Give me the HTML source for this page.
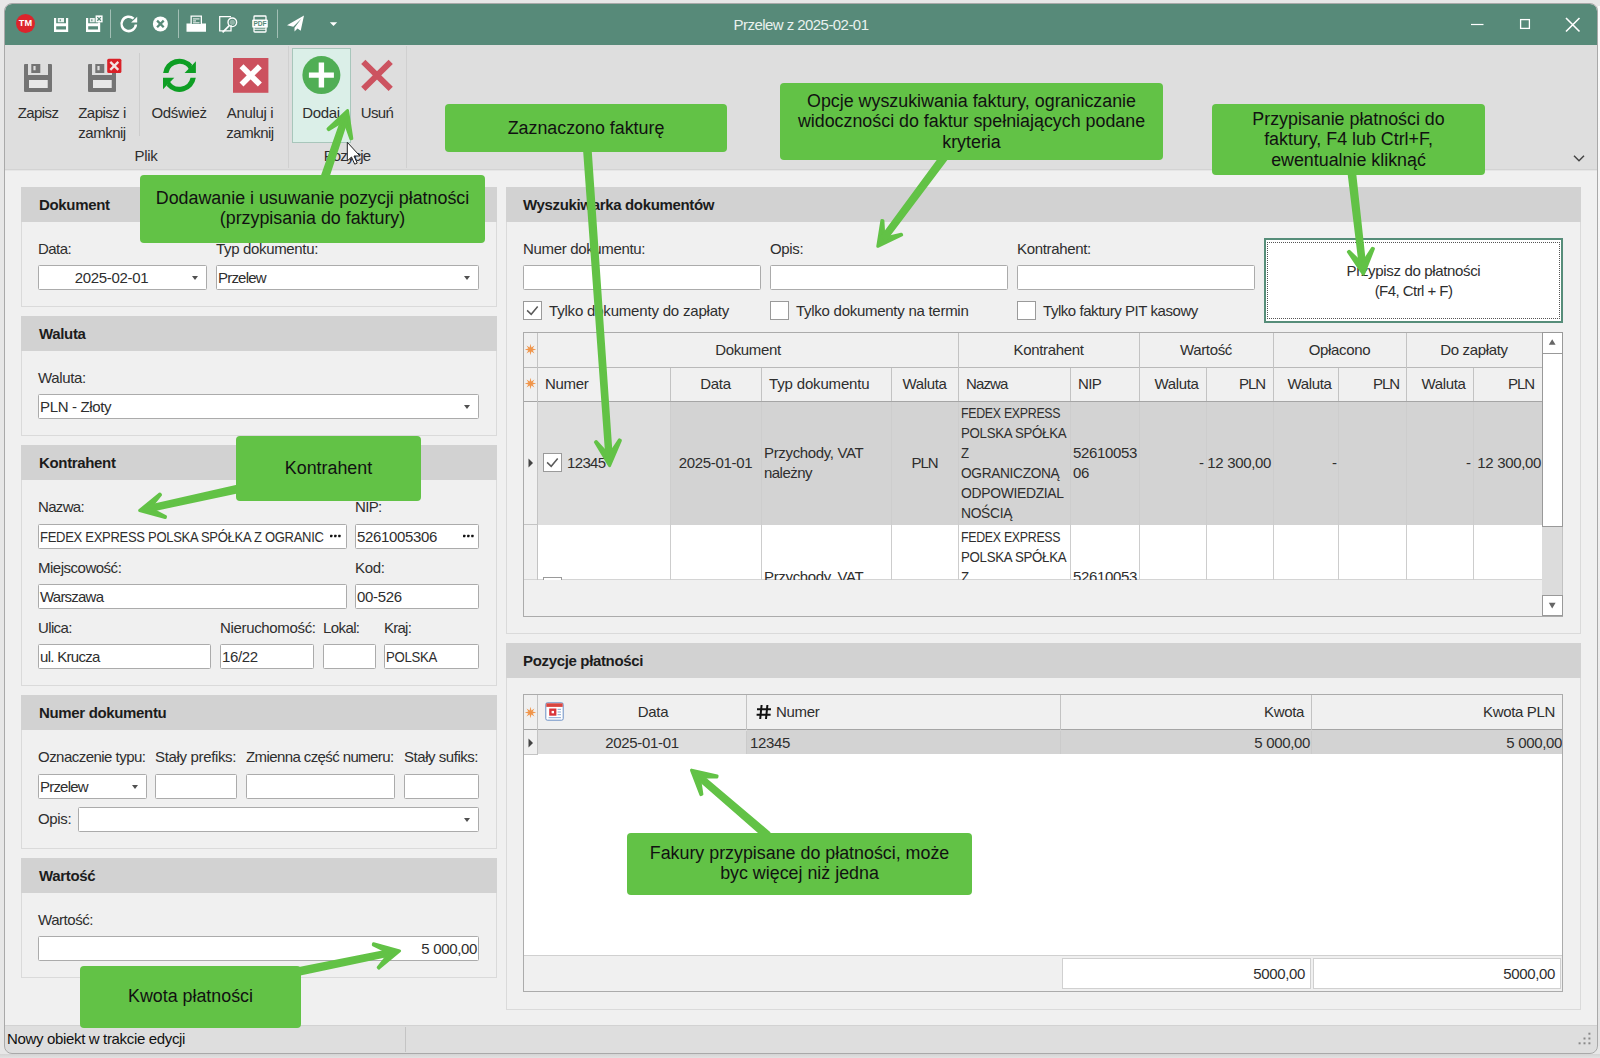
<!DOCTYPE html>
<html>
<head>
<meta charset="utf-8">
<title>Przelew z 2025-02-01</title>
<style>
*{box-sizing:border-box;margin:0;padding:0}
html,body{width:1600px;height:1058px;overflow:hidden}
body{position:relative;background:#e7e7e7;font-family:"Liberation Sans",sans-serif;font-size:15px;letter-spacing:-0.34px;color:#2e2e2e;line-height:20px}
.a{position:absolute}
.t{position:absolute;white-space:nowrap;line-height:20px;height:20px}
.c{text-align:center}
.r{text-align:right}
.b{font-weight:bold;color:#1c1c1c}
/* window */
#frame{left:4px;top:3px;width:1594px;height:1051px;border:1px solid #a9a9a9;border-radius:8px;z-index:50;pointer-events:none}
#titlebar{left:5px;top:4px;width:1592px;height:41px;background:#578a79;border-radius:7px 7px 0 0}
#ribbon{left:5px;top:45px;width:1592px;height:125px;background:#dedede}
#ribbonline{left:5px;top:169px;width:1592px;height:2px;background:linear-gradient(#d3d3d3,#d3d3d3 50%,#e6e6e6 50%)}
#content{left:5px;top:171px;width:1592px;height:855px;background:#f0f0f0}
#status{left:5px;top:1025px;width:1592px;height:28px;background:#dedede;border-radius:0 0 7px 7px;border-top:1px solid #d2d2d2}
/* group boxes */
.g{position:absolute;border:1px solid #dadada;background:#f0f0f0}
.gh{position:absolute;left:-1px;top:-1px;right:-1px;height:35px;background:#d2d2d2}
.gh span{position:absolute;left:18px;top:7.5px;font-weight:bold;color:#1c1c1c;white-space:nowrap;line-height:20px}
/* inputs */
.i{position:absolute;height:25px;border:1px solid #ababab;border-radius:1.5px;background:#fff;line-height:23px;padding-left:1px;white-space:nowrap;overflow:hidden}
.dd{position:absolute;width:0;height:0;border-left:3.5px solid transparent;border-right:3.5px solid transparent;border-top:4px solid #505050}
.cb{position:absolute;width:19px;height:19px;border:1px solid #9a9a9a;background:#fff}
.vl{width:1px;background:#c3c3c3}
.cl{top:69px;width:1px;height:178px;background:#cdcdcd}
.u{transform:scaleX(.885);transform-origin:0 50%}
/* callouts */
.co{position:absolute;background:#62c246;border-radius:4px;color:#111;font-size:17.85px;letter-spacing:0;line-height:20.3px;text-align:center;z-index:30;white-space:nowrap}
#arrows{left:0;top:0;z-index:29}
#arrows path{fill:#62c246;stroke:#62c246;stroke-width:3;stroke-linejoin:round}
</style>
</head>
<body>
<!-- window chrome -->
<div class="a" style="left:0;top:1054px;width:1600px;height:4px;background:linear-gradient(#d4d4d4,#e2e2e2)"></div>
<div class="a" style="left:1598px;top:6px;width:2px;height:1040px;background:linear-gradient(#fafafa,#f4f4f4 30%,#e4e4e4)"></div>
<div class="a" id="titlebar"></div>
<div class="a" id="ribbon"></div>
<div class="a" id="ribbonline"></div>
<div class="a" id="content"></div>
<div class="a" id="status"></div>
<div class="a" id="frame"></div>

<!-- title bar -->
<div class="a" style="left:16px;top:14px;width:19px;height:19px;border-radius:50%;background:#dc242c"></div>
<div class="t c" style="left:16px;top:14px;width:19px;height:19px;line-height:19px;font-size:9.2px;font-weight:bold;color:#fff;letter-spacing:0">TM</div>
<svg class="a" style="left:0;top:0" width="400" height="46" viewBox="0 0 400 46">
 <g fill="#fff">
  <!-- save 1 -->
  <path d="M54 18h2.200v5.200h9.800v-5.200h2.200v14H54z M56.200 26.300v3.200h9.800v-3.200z" fill-rule="evenodd"/>
  <path d="M57.800 18h6.200v4.200h-6.200z M59.700 19.200v2h1.100v-2z" fill-rule="evenodd" opacity=".88"/>
  <!-- save 2 -->
  <path d="M86 18h2.200v5.200h9.800v-.7h2.200v9.500H86z M88.200 26.300v3.200h9.800v-3.200z" fill-rule="evenodd"/>
  <path d="M89.800 18h5v4.200h-5z M91.300 19.200v2h1.100v-2z" fill-rule="evenodd" opacity=".88"/>
  <path d="M95.600 15.400h7v7h-7z"/>
  <path d="M97.300 17.100l3.600 3.600M100.900 17.100l-3.600 3.600" stroke="#578a79" stroke-width="1.300" fill="none"/>
  <!-- separators -->
  <rect x="110" y="9.5" width="1" height="28.5" opacity=".45"/>
  <rect x="178" y="9.5" width="1" height="28.5" opacity=".45"/>
  <rect x="277" y="9.5" width="1" height="28.5" opacity=".45"/>
  <!-- cancel -->
  <circle cx="160.400" cy="23.900" r="7.500"/>
  <!-- printer -->
  <path d="M186.5 23.5h4v-8h11.5v8h4v8.3h-19.5z M191.8 16.8v7.3h8.9v-7.3z" fill-rule="evenodd"/>
  <rect x="193" y="18.3" width="6.5" height="1.2" opacity=".8"/><rect x="193" y="20.3" width="3" height="1.2" opacity=".8"/><rect x="193" y="22.2" width="6.5" height="1.2" opacity=".8"/>
  <!-- send -->
  <path d="M304 15.6L287 25.2l6.3 1.6L301.5 18.6l-7 9.2v3.6l3-2.8 3.2 2.2z"/>
  <!-- dropdown -->
  <path d="M329.8 22.3h7.4l-3.7 3.7z"/>
 </g>
 <g fill="none" stroke="#fff">
  <!-- refresh -->
  <path d="M135.900 24.500A7.200 7.200 0 1 1 133.600 18.600" stroke-width="2.500"/>
  <!-- cancel x -->
  <path d="M157.100 20.600l6.600 6.600M163.700 20.600l-6.600 6.600" stroke="#578a79" stroke-width="2.300"/>
  <!-- preview -->
  <path d="M231 16.7h-11.3v14.2h11.3v-6" stroke-width="1.3"/>
  <circle cx="232.3" cy="22.3" r="4.3" stroke-width="1.4"/>
  <path d="M229.2 25.6l-6.6 6.8" stroke-width="1.6"/>
  <!-- pdf -->
  <path d="M254 20v-3.2q0-.8.8-.8h10.4q.8 0 .8.8v3.2M254 27.5v3.7q0 .8.8.8h10.4q.8 0 .8-.8v-3.7" stroke-width="1.3"/>
  <path d="M254 29.2h12" stroke-width="1"/>
 </g>
 <path d="M137.200 16.700V22.500H131.100Z" fill="#fff"/>
 <circle cx="232.3" cy="22.3" r="2.6" fill="#fff" opacity=".35"/>
 <rect x="252.2" y="19.6" width="15.6" height="8.2" rx="1" fill="#fff"/>
 <text x="260" y="26.3" font-family="Liberation Sans" font-size="6.6" font-weight="bold" fill="#578a79" text-anchor="middle" letter-spacing="0">PDF</text>
</svg>
<div class="t c" style="left:601px;top:15px;width:400px;color:#e9f1ee;letter-spacing:-0.55px">Przelew z 2025-02-01</div>
<svg class="a" style="left:1450px;top:4px" width="147" height="41" viewBox="1450 4 147 41">
 <g fill="none" stroke="#fff">
  <path d="M1471 24.5h12.5" stroke-width="1.2"/>
  <rect x="1520.6" y="19.6" width="8.8" height="8.8" stroke-width="1.3"/>
  <path d="M1566 18l13.5 13.5M1579.500 18l-13.500 13.500" stroke-width="1.6"/>
 </g>
</svg>
<!--TITLEBAR-END-->
<!-- ribbon -->
<div class="a" style="left:292px;top:48px;width:59px;height:95px;background:#dbefe8;border:1px solid #a8c6bb"></div>
<div class="a" style="left:139px;top:53px;width:1px;height:83px;background:#cdcdcd"></div>
<div class="a" style="left:288px;top:46px;width:1px;height:122px;background:#d0d0d0"></div>
<div class="a" style="left:406px;top:46px;width:1px;height:122px;background:#d0d0d0"></div>
<svg class="a" style="left:0;top:45px" width="420" height="125" viewBox="0 45 420 125">
 <!-- save -->
 <g fill="#747474">
  <path d="M24 65q0-1 1-1h3v11h20v-11h3q1 0 1 1v26q0 1-1 1H25q-1 0-1-1z M29 80v8h18.500v-8z" fill-rule="evenodd"/>
  <path d="M31.300 64h9v9h-9z M33.400 66v4.200h2.200V66z" fill-rule="evenodd"/>
  <path d="M88 65q0-1 1-1h3v11h20v-2h4v18q0 1-1 1H89q-1 0-1-1z M93 80v8h18.500v-8z" fill-rule="evenodd"/>
  <path d="M95.300 64h9v9h-9z M97.400 66v4.200h2.200V66z" fill-rule="evenodd"/>
 </g>
 <rect x="29" y="80" width="18.500" height="8" fill="#e8e8e8"/>
 <rect x="93" y="80" width="18.500" height="8" fill="#e8e8e8"/>
 <rect x="107.200" y="58.800" width="14.200" height="14.200" rx="1.500" fill="#da2128"/>
 <path d="M110.300 61.900l8 8M118.300 61.900l-8 8" stroke="#f2e4e4" stroke-width="2.300" fill="none"/>
 <!-- refresh -->
 <g fill="#0e9e24">
  <g id="rf"><path d="M163.100 72.900A16.500 16.500 0 0 1 192.100 64.600L189.700 70.400A11.300 11.300 0 0 0 168.400 72.900Z"/><path d="M195.900 61.300V72.900H184.600Z"/></g>
  <g transform="rotate(180 179.450 75.300)"><path d="M163.100 72.900A16.500 16.500 0 0 1 192.100 64.600L189.700 70.400A11.300 11.300 0 0 0 168.400 72.900Z"/><path d="M195.900 61.300V72.900H184.600Z"/></g>
 </g>
 <!-- cancel -->
 <rect x="233" y="58" width="35.400" height="34.800" fill="#cc515e"/>
 <path d="M241.500 66.200l18.400 18.400M259.900 66.200l-18.400 18.400" stroke="#fff" stroke-width="5.600" fill="none"/>
 <!-- add -->
 <circle cx="321.400" cy="75.100" r="19" fill="#50ae55"/>
 <path d="M308.900 75.100h25M321.400 62.600v25" stroke="#fff" stroke-width="5.400" fill="none"/>
 <!-- delete -->
 <path d="M363.300 61.800l27.400 27M390.700 61.800l-27.400 27" stroke="#cc5360" stroke-width="6" fill="none"/>
</svg>
<div class="t c" style="left:8px;top:103px;width:60px;letter-spacing:-0.6px">Zapisz</div>
<div class="t c" style="left:62px;top:103px;width:80px;letter-spacing:-0.5px">Zapisz i</div>
<div class="t c" style="left:62px;top:123px;width:80px;letter-spacing:-0.5px">zamknij</div>
<div class="t c" style="left:139px;top:103px;width:80px">Odśwież</div>
<div class="t c" style="left:210px;top:103px;width:80px">Anuluj i</div>
<div class="t c" style="left:210px;top:123px;width:80px;letter-spacing:-0.5px">zamknij</div>
<div class="t c" style="left:291px;top:103px;width:60px">Dodaj</div>
<div class="t c" style="left:347px;top:103px;width:60px;letter-spacing:-0.65px">Usuń</div>
<div class="t c" style="left:116px;top:146px;width:60px">Plik</div>
<div class="t c" style="left:317px;top:146px;width:60px;letter-spacing:-0.85px">Pozycje</div>
<svg class="a" style="left:1570px;top:150px" width="18" height="16" viewBox="0 0 18 16"><path d="M4 5.800l5 5 5-5" fill="none" stroke="#444" stroke-width="1.500"/></svg>
<!--RIBBON-END-->
<!-- LEFT: Dokument -->
<div class="g" style="left:21px;top:187px;width:476px;height:120px"><div class="gh"><span>Dokument</span></div></div>
<div class="t" style="left:38px;top:239px;letter-spacing:-0.55px">Data:</div>
<div class="t" style="left:216px;top:239px">Typ dokumentu:</div>
<div class="i c" style="left:38px;top:265px;width:169px;padding-right:23px">2025-02-01</div>
<div class="dd" style="left:192px;top:276px"></div>
<div class="i" style="left:216px;top:265px;width:263px;letter-spacing:-0.8px">Przelew</div>
<div class="dd" style="left:463.5px;top:276px"></div>
<!-- Waluta -->
<div class="g" style="left:21px;top:316px;width:476px;height:120px"><div class="gh"><span>Waluta</span></div></div>
<div class="t" style="left:38px;top:368px">Waluta:</div>
<div class="i" style="left:38px;top:394px;width:441px">PLN - Złoty</div>
<div class="dd" style="left:463.5px;top:405px"></div>
<!-- Kontrahent -->
<div class="g" style="left:21px;top:445px;width:476px;height:241px"><div class="gh"><span>Kontrahent</span></div></div>
<div class="t" style="left:38px;top:497px;letter-spacing:-0.67px">Nazwa:</div>
<div class="t" style="left:355px;top:497px;letter-spacing:-0.65px">NIP:</div>
<div class="i" style="left:38px;top:524px;width:309px"><span style="display:inline-block;transform:scaleX(.868);transform-origin:0 50%">FEDEX EXPRESS POLSKA SPÓŁKA Z OGRANIC</span></div>
<svg class="a" style="left:330px;top:534px" width="12" height="4" viewBox="0 0 12 4"><g fill="#111"><rect x="0" y=".800" width="2.400" height="2.400" rx=".400"/><rect x="4.100" y=".800" width="2.400" height="2.400" rx=".400"/><rect x="8.200" y=".800" width="2.400" height="2.400" rx=".400"/></g></svg>
<div class="i" style="left:355px;top:524px;width:124px">5261005306</div>
<svg class="a" style="left:462.5px;top:534px" width="12" height="4" viewBox="0 0 12 4"><g fill="#111"><rect x="0" y=".800" width="2.400" height="2.400" rx=".400"/><rect x="4.100" y=".800" width="2.400" height="2.400" rx=".400"/><rect x="8.200" y=".800" width="2.400" height="2.400" rx=".400"/></g></svg>
<div class="t" style="left:38px;top:558px;letter-spacing:-0.49px">Miejscowość:</div>
<div class="t" style="left:355px;top:558px">Kod:</div>
<div class="i" style="left:38px;top:584px;width:309px;letter-spacing:-0.78px">Warszawa</div>
<div class="i" style="left:355px;top:584px;width:124px">00-526</div>
<div class="t" style="left:38px;top:618px;letter-spacing:-0.64px">Ulica:</div>
<div class="t" style="left:220px;top:618px">Nieruchomość:</div>
<div class="t" style="left:323px;top:618px;letter-spacing:-0.6px">Lokal:</div>
<div class="t" style="left:384px;top:618px;letter-spacing:-0.75px">Kraj:</div>
<div class="i" style="left:38px;top:644px;width:173px;letter-spacing:-0.7px">ul. Krucza</div>
<div class="i" style="left:220px;top:644px;width:94px">16/22</div>
<div class="i" style="left:323px;top:644px;width:53px"></div>
<div class="i" style="left:384px;top:644px;width:95px"><span style="display:inline-block;transform:scaleX(.88);transform-origin:0 50%">POLSKA</span></div>
<!-- Numer dokumentu -->
<div class="g" style="left:21px;top:695px;width:476px;height:154px"><div class="gh"><span>Numer dokumentu</span></div></div>
<div class="t" style="left:38px;top:747px;letter-spacing:-0.53px">Oznaczenie typu:</div>
<div class="t" style="left:155px;top:747px">Stały prefiks:</div>
<div class="t" style="left:246px;top:747px;letter-spacing:-0.6px">Zmienna część numeru:</div>
<div class="t" style="left:404px;top:747px;letter-spacing:-0.46px">Stały sufiks:</div>
<div class="i" style="left:38px;top:774px;width:109px;letter-spacing:-0.8px">Przelew</div>
<div class="dd" style="left:131.5px;top:785px"></div>
<div class="i" style="left:155px;top:774px;width:82px"></div>
<div class="i" style="left:246px;top:774px;width:149px"></div>
<div class="i" style="left:404px;top:774px;width:75px"></div>
<div class="t" style="left:38px;top:809px">Opis:</div>
<div class="i" style="left:78px;top:807px;width:401px"></div>
<div class="dd" style="left:463.5px;top:818px"></div>
<!-- Wartość -->
<div class="g" style="left:21px;top:858px;width:476px;height:120px"><div class="gh"><span>Wartość</span></div></div>
<div class="t" style="left:38px;top:910px;letter-spacing:-0.45px">Wartość:</div>
<div class="i r" style="left:38px;top:936px;width:441px;padding-right:1px">5 000,00</div>
<!--LEFT-END-->
<!-- RIGHT TOP: Wyszukiwarka -->
<div class="g" style="left:506px;top:187px;width:1075px;height:447px"><div class="gh"><span style="left:17px">Wyszukiwarka dokumentów</span></div></div>
<div class="t" style="left:523px;top:239px">Numer dokumentu:</div>
<div class="t" style="left:770px;top:239px">Opis:</div>
<div class="t" style="left:1017px;top:239px">Kontrahent:</div>
<div class="i" style="left:523px;top:265px;width:238px"></div>
<div class="i" style="left:770px;top:265px;width:238px"></div>
<div class="i" style="left:1017px;top:265px;width:238px"></div>
<div class="cb" style="left:523px;top:301px"></div>
<svg class="a" style="left:523px;top:301px" width="19" height="19" viewBox="0 0 19 19"><path d="M4.100 9.400l4.100 3.900 6.500-7.900" fill="none" stroke="#5a5a5a" stroke-width="1.500"/></svg>
<div class="t" style="left:549px;top:301px;letter-spacing:-0.19px">Tylko dokumenty do zapłaty</div>
<div class="cb" style="left:770px;top:301px"></div>
<div class="t" style="left:796px;top:301px;letter-spacing:-0.27px">Tylko dokumenty na termin</div>
<div class="cb" style="left:1017px;top:301px"></div>
<div class="t" style="left:1043px;top:301px;letter-spacing:-0.45px">Tylko faktury PIT kasowy</div>
<!-- button -->
<div class="a" style="left:1264px;top:238px;width:299px;height:85px;background:#fff;border:2px solid #568d79"></div>
<div class="a" style="left:1267px;top:242px;width:293px;height:77px;border:1px dotted #555"></div>
<div class="t c" style="left:1264px;top:261px;width:299px">Przypisz do płatności</div>
<div class="t c" style="left:1264px;top:281px;width:299px;letter-spacing:-0.55px">(F4, Ctrl + F)</div>
<!-- grid -->
<div class="a" id="g1" style="left:523px;top:332px;width:1040px;height:285px;border:1px solid #ababab;background:#f0f0f0;overflow:hidden">
 <div class="a" style="left:14px;top:69px;width:1005px;height:123px;background:#d3d3d3"></div>
 <div class="a" style="left:14px;top:69px;width:133px;height:123px;background:#dedede"></div>
 <div class="a" style="left:14px;top:192px;width:1005px;height:55px;background:#fff"></div>
 <!-- header lines -->
 <div class="a" style="left:0;top:34px;width:1019px;height:1px;background:#b9b9b9"></div>
 <div class="a" style="left:0;top:68px;width:1019px;height:1px;background:#a5a5a5"></div>
 <div class="a" style="left:0;top:246px;width:1019px;height:1px;background:#d4d4d4"></div>
 <div class="a" style="left:0;top:191px;width:14px;height:1px;background:#c4c4c4"></div>
 <!-- vertical lines (full) -->
 <div class="a vl" style="left:13px;top:0;height:247px"></div>
 <div class="a vl" style="left:434px;top:0;height:68px"></div>
 <div class="a vl" style="left:615px;top:0;height:68px"></div>
 <div class="a vl" style="left:749px;top:0;height:68px"></div>
 <div class="a vl" style="left:882px;top:0;height:68px"></div>
 <div class="a vl" style="left:146px;top:35px;height:33px"></div>
 <div class="a vl" style="left:237px;top:35px;height:33px"></div>
 <div class="a vl" style="left:367px;top:35px;height:33px"></div>
 <div class="a vl" style="left:546px;top:35px;height:33px"></div>
 <div class="a vl" style="left:682px;top:35px;height:33px"></div>
 <div class="a vl" style="left:814px;top:35px;height:33px"></div>
 <div class="a vl" style="left:949px;top:35px;height:33px"></div>
 <!-- cell lines -->
 <div class="a cl" style="left:146px"></div><div class="a cl" style="left:237px"></div><div class="a cl" style="left:367px"></div><div class="a cl" style="left:434px"></div>
 <div class="a cl" style="left:546px"></div><div class="a cl" style="left:615px"></div><div class="a cl" style="left:682px"></div><div class="a cl" style="left:749px"></div>
 <div class="a cl" style="left:814px"></div><div class="a cl" style="left:882px"></div><div class="a cl" style="left:949px"></div>
 <!-- header text -->
 <div class="t c" style="left:14px;top:7px;width:420px">Dokument</div>
 <div class="t c" style="left:434px;top:7px;width:181px">Kontrahent</div>
 <div class="t c" style="left:615px;top:7px;width:134px">Wartość</div>
 <div class="t c" style="left:749px;top:7px;width:133px">Opłacono</div>
 <div class="t c" style="left:882px;top:7px;width:136px">Do zapłaty</div>
 <div class="t" style="left:21px;top:41px">Numer</div>
 <div class="t c" style="left:146px;top:41px;width:91px">Data</div>
 <div class="t" style="left:245px;top:41px;letter-spacing:-0.16px">Typ dokumentu</div>
 <div class="t c" style="left:367px;top:41px;width:67px">Waluta</div>
 <div class="t" style="left:442px;top:41px;letter-spacing:-0.85px">Nazwa</div>
 <div class="t" style="left:554px;top:41px;letter-spacing:-0.65px">NIP</div>
 <div class="t c" style="left:619px;top:41px;width:67px">Waluta</div>
 <div class="t r" style="left:682px;top:41px;width:59px;letter-spacing:-1.1px">PLN</div>
 <div class="t c" style="left:753px;top:41px;width:65px">Waluta</div>
 <div class="t r" style="left:814px;top:41px;width:61px;letter-spacing:-1.1px">PLN</div>
 <div class="t c" style="left:886px;top:41px;width:67px">Waluta</div>
 <div class="t r" style="left:949px;top:41px;width:61px;letter-spacing:-1.1px">PLN</div>
 <!-- row 1 -->
 <svg class="a" style="left:3px;top:124px" width="8" height="12" viewBox="0 0 8 12"><path d="M1.500 1.500v9l4.500-4.500z" fill="#444"/></svg>
 <div class="cb" style="left:19px;top:120px"></div>
 <svg class="a" style="left:19px;top:120px" width="19" height="19" viewBox="0 0 19 19"><path d="M4.100 9.400l4.100 3.900 6.500-7.900" fill="none" stroke="#5a5a5a" stroke-width="1.500"/></svg>
 <div class="t" style="left:43px;top:120px;letter-spacing:-0.65px">12345</div>
 <div class="t c" style="left:146px;top:120px;width:91px">2025-01-01</div>
 <div class="t" style="left:240px;top:110px">Przychody, VAT</div>
 <div class="t" style="left:240px;top:130px;letter-spacing:-0.54px">należny</div>
 <div class="t c" style="left:367px;top:120px;width:67px;letter-spacing:-1.1px">PLN</div>
 <div class="t u" style="left:437px;top:70px;transform:scaleX(.823)">FEDEX EXPRESS</div>
 <div class="t u" style="left:437px;top:90px">POLSKA SPÓŁKA</div>
 <div class="t u" style="left:437px;top:110px">Z</div>
 <div class="t u" style="left:437px;top:130px;transform:scaleX(.912)">OGRANICZONĄ</div>
 <div class="t u" style="left:437px;top:150px;transform:scaleX(.926)">ODPOWIEDZIAL</div>
 <div class="t u" style="left:437px;top:170px;transform:scaleX(.922)">NOŚCIĄ</div>
 <div class="t" style="left:549px;top:110px">52610053</div>
 <div class="t" style="left:549px;top:130px">06</div>
 <div class="t" style="left:675px;top:120px">-</div>
 <div class="t r" style="left:682px;top:120px;width:65px">12 300,00</div>
 <div class="t" style="left:808px;top:120px">-</div>
 <div class="t" style="left:942px;top:120px">-</div>
 <div class="t r" style="left:949px;top:120px;width:68px">12 300,00</div>
 <!-- row 2 (clipped) -->
 <div class="a" style="left:0;top:192px;width:1019px;height:55px;overflow:hidden">
  <div class="cb" style="left:19px;top:52px"></div>
  <div class="t" style="left:240px;top:42px">Przychody, VAT</div>
  <div class="t u" style="left:437px;top:2px;transform:scaleX(.823)">FEDEX EXPRESS</div>
  <div class="t u" style="left:437px;top:22px">POLSKA SPÓŁKA</div>
  <div class="t u" style="left:437px;top:42px">Z</div>
  <div class="t" style="left:549px;top:42px">52610053</div>
 </div>
 <!-- stars -->
 <svg class="a" style="left:0px;top:10px" width="13" height="13" viewBox="-6.500 -6.500 13 13"><path d="M0.00 -5.70L0.88 -2.12L4.03 -4.03L2.12 -0.88L5.70 0.00L2.12 0.88L4.03 4.03L0.88 2.12L0.00 5.70L-0.88 2.12L-4.03 4.03L-2.12 0.88L-5.70 0.00L-2.12 -0.88L-4.03 -4.03L-0.88 -2.12Z" fill="#f0954a"/></svg>
 <svg class="a" style="left:0px;top:44px" width="13" height="13" viewBox="-6.500 -6.500 13 13"><path d="M0.00 -5.70L0.88 -2.12L4.03 -4.03L2.12 -0.88L5.70 0.00L2.12 0.88L4.03 4.03L0.88 2.12L0.00 5.70L-0.88 2.12L-4.03 4.03L-2.12 0.88L-5.70 0.00L-2.12 -0.88L-4.03 -4.03L-0.88 -2.12Z" fill="#f0954a"/></svg>
</div>
<!-- scrollbar g1 -->
<div class="a" style="left:1542px;top:332px;width:21px;height:284px;background:#dcdcdc;border-right:1px solid #c2c2c2"></div>
<div class="a" style="left:1542px;top:332px;width:21px;height:22px;background:#fff;border:1px solid #999"></div>
<div class="a" style="left:1542px;top:353px;width:21px;height:174px;background:#fff;border:1px solid #999"></div>
<div class="a" style="left:1542px;top:595px;width:21px;height:21px;background:#fff;border:1px solid #999"></div>
<svg class="a" style="left:1547px;top:337px" width="11" height="11" viewBox="0 0 11 11"><path d="M1.800 7.800h6.800l-3.400-5.600z" fill="#666"/></svg>
<svg class="a" style="left:1547px;top:600px" width="11" height="11" viewBox="0 0 11 11"><path d="M1.800 2.800h6.800l-3.400 5.600z" fill="#666"/></svg>
<!--RIGHTTOP-END-->
<!-- RIGHT BOTTOM: Pozycje płatności -->
<div class="g" style="left:506px;top:643px;width:1075px;height:367px"><div class="gh"><span style="left:17px">Pozycje płatności</span></div></div>
<div class="a" id="g2" style="left:523px;top:694px;width:1040px;height:298px;border:1px solid #ababab;background:#fff;overflow:hidden">
 <div class="a" style="left:0;top:0;width:1038px;height:34px;background:#f0f0f0"></div>
 <div class="a" style="left:0;top:35px;width:14px;height:24px;background:#f0f0f0"></div>
 <div class="a" style="left:14px;top:35px;width:1024px;height:24px;background:#d3d3d3"></div>
 <div class="a" style="left:14px;top:35px;width:209px;height:24px;background:#dedede"></div>
 <div class="a" style="left:0;top:260px;width:1038px;height:36px;background:#f0f0f0;border-top:1px solid #d0d0d0"></div>
 <div class="a" style="left:0;top:34px;width:1038px;height:1px;background:#a5a5a5"></div>
 <div class="a" style="left:0;top:59px;width:14px;height:1px;background:#c4c4c4"></div>
 <div class="a vl" style="left:13px;top:0;height:60px"></div>
 <div class="a vl" style="left:222px;top:0;height:35px"></div>
 <div class="a vl" style="left:536px;top:0;height:35px"></div>
 <div class="a vl" style="left:787px;top:0;height:35px"></div>
 <div class="a" style="left:222px;top:36px;width:1px;height:23px;background:#cbcbcb"></div>
 <div class="a" style="left:536px;top:36px;width:1px;height:23px;background:#cbcbcb"></div>
 <div class="a" style="left:787px;top:36px;width:1px;height:23px;background:#cbcbcb"></div>
 <!-- footer cells -->
 <div class="a r" style="left:538px;top:263px;width:249px;height:31px;background:#fff;border:1px solid #d0d0d0;line-height:29px;padding-right:5px">5000,00</div>
 <div class="a r" style="left:789px;top:263px;width:248px;height:31px;background:#fff;border:1px solid #d0d0d0;line-height:29px;padding-right:5px">5000,00</div>
 <!-- header -->
 <svg class="a" style="left:0px;top:11px" width="13" height="13" viewBox="-6.500 -6.500 13 13"><path d="M0.00 -5.70L0.88 -2.12L4.03 -4.03L2.12 -0.88L5.70 0.00L2.12 0.88L4.03 4.03L0.88 2.12L0.00 5.70L-0.88 2.12L-4.03 4.03L-2.12 0.88L-5.70 0.00L-2.12 -0.88L-4.03 -4.03L-0.88 -2.12Z" fill="#f0954a"/></svg>
 <svg class="a" style="left:21px;top:7px" width="19" height="19" viewBox="0 0 19 19">
  <rect x=".800" y=".800" width="17.400" height="17.400" rx="1.500" fill="#fff" stroke="#6b8fc4" stroke-width="1"/>
  <rect x="1.300" y="1.300" width="16.400" height="3.600" fill="#d9453f"/>
  <rect x="4.200" y="6.500" width="7.200" height="7.200" fill="#d9343a"/>
  <rect x="6.600" y="8.900" width="2.400" height="2.400" fill="#fff"/>
  <g fill="#9db6da"><rect x="12.600" y="6.800" width="3.400" height="1.200"/><rect x="12.600" y="9.400" width="3.400" height="1.200"/><rect x="12.600" y="12" width="3.400" height="1.200"/><rect x="3.600" y="15" width="12.400" height="1.200"/></g>
 </svg>
 <div class="t c" style="left:43px;top:7px;width:172px">Data</div>
 <svg class="a" style="left:232px;top:9px" width="16" height="16" viewBox="0 0 16 16"><path d="M5.600 1l-1.400 14M11.400 1l-1.400 14M1 5.200h14M.600 10.800h14" stroke="#111" stroke-width="2" fill="none"/></svg>
 <div class="t" style="left:252px;top:7px">Numer</div>
 <div class="t r" style="left:536px;top:7px;width:244px">Kwota</div>
 <div class="t r" style="left:787px;top:7px;width:244px">Kwota PLN</div>
 <!-- row -->
 <svg class="a" style="left:3px;top:42px" width="8" height="12" viewBox="0 0 8 12"><path d="M1.500 1.500v9l4.500-4.500z" fill="#444"/></svg>
 <div class="t c" style="left:14px;top:38px;width:208px">2025-01-01</div>
 <div class="t" style="left:226px;top:38px">12345</div>
 <div class="t r" style="left:536px;top:38px;width:250px">5 000,00</div>
 <div class="t r" style="left:787px;top:38px;width:251px">5 000,00</div>
</div>
<!--RIGHTBOTTOM-END-->
<div class="t" style="left:7px;top:1029px;color:#111">Nowy obiekt w trakcie edycji</div>
<div class="a" style="left:405px;top:1027px;width:1px;height:25px;background:#c4c4c4"></div>
<svg class="a" style="left:1576px;top:1030px" width="16" height="16" viewBox="0 0 16 16"><g fill="#8a8a8a"><rect x="12.400" y="2.700" width="2" height="2"/><rect x="7.500" y="7.500" width="2" height="2"/><rect x="12.400" y="7.500" width="2" height="2"/><rect x="2.600" y="12.300" width="2" height="2"/><rect x="7.500" y="12.300" width="2" height="2"/><rect x="12.400" y="12.300" width="2" height="2"/></g></svg>
<!--STATUS-END-->
<!-- CALLOUTS -->
<svg class="a" id="arrows" width="1600" height="1058" viewBox="0 0 1600 1058">
 <path d="M347.5 110.6L328.0 128.9L328.6 129.7L344.3 120.2L350.8 138.7L351.8 138.5Z"/><path d="M326.7 180.9L347.5 117.6L343.3 116.2L321.3 179.1Z"/>
 <path d="M609.6 465.7L595.4 442.1L596.2 441.5L608.9 455.5L619.4 439.9L620.4 440.3Z"/><path d="M584.5 149.2L607.0 459.2L611.4 458.9L590.1 148.8Z"/>
 <path d="M877.8 246.3L881.9 220.5L882.9 220.7L883.9 238.2L901.3 234.2L901.7 235.0Z"/><path d="M942.7 154.3L880.0 239.7L883.5 242.3L947.3 157.7Z"/>
 <path d="M1363.4 274.1L1348.4 251.9L1349.2 251.3L1362.3 264.0L1372.4 248.3L1373.4 248.7Z"/><path d="M1348.7 170.3L1360.5 267.7L1364.9 267.2L1354.3 169.7Z"/>
 <path d="M139.7 510.5L159.9 494.0L160.5 494.8L149.6 508.3L165.5 516.5L165.3 517.5Z"/><path d="M239.4 485.8L145.7 506.9L146.7 511.2L240.6 491.4Z"/>
 <path d="M691.5 770.1L717.1 776.0L716.9 777.0L699.2 776.7L701.9 794.2L700.9 794.6Z"/><path d="M768.9 832.8L698.0 772.8L695.1 776.1L765.1 837.2Z"/>
 <path d="M399.6 950.9L373.5 943.8L373.3 944.8L389.7 952.9L378.2 967.4L378.8 968.2Z"/><path d="M296.6 974.8L393.5 954.4L392.6 950.0L295.4 969.2Z"/>
</svg>
<div class="co" style="left:140px;top:175px;width:345px;height:68px;padding-top:13px">Dodawanie i usuwanie pozycji płatności<br>(przypisania do faktury)</div>
<div class="co" style="left:445px;top:104px;width:282px;height:48px;padding-top:14px">Zaznaczono fakturę</div>
<div class="co" style="left:780px;top:83px;width:383px;height:77px;padding-top:8px">Opcje wyszukiwania faktury, ograniczanie<br>widoczności do faktur spełniających podane<br>kryteria</div>
<div class="co" style="left:1212px;top:104px;width:273px;height:71px;padding-top:5px">Przypisanie płatności do<br>faktury, F4 lub Ctrl+F,<br>ewentualnie kliknąć</div>
<div class="co" style="left:236px;top:436px;width:185px;height:65px;padding-top:22px">Kontrahent</div>
<div class="co" style="left:627px;top:833px;width:345px;height:62px;padding-top:10px">Fakury przypisane do płatności, może<br>byc więcej niż jedna</div>
<div class="co" style="left:80px;top:966px;width:221px;height:62px;padding-top:20px">Kwota płatności</div>
<!-- mouse cursor -->
<svg class="a" style="left:345px;top:140px;z-index:40" width="20" height="28" viewBox="0 0 20 28"><path d="M2.300 2.300v18.600l4.200-3.900 3.200 7.200 2.500-1.100-3.200-7.100h5.900z" fill="#fff" stroke="#222" stroke-width="1" stroke-linejoin="miter"/></svg>
<!--CALLOUTS-END-->
</body>
</html>
